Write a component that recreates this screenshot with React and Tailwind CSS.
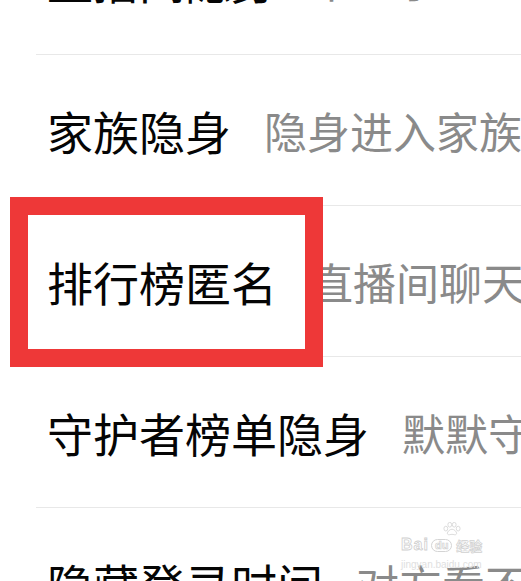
import React from "react";

const rows = [
  { title: "直播间隐身", desc: "不显示" },
  { title: "家族隐身", desc: "隐身进入家族" },
  { title: "排行榜匿名", desc: "直播间聊天" },
  { title: "守护者榜单隐身", desc: "默默守护" },
  { title: "隐藏登录时间", desc: "对方看不到" },
];

function Row({ title, desc, last }) {
  return (
    <div className="flex flex-col">
      <div className="flex h-[150px] items-center overflow-hidden whitespace-nowrap pl-[47px]">
        <span className="text-[46px] leading-none text-[#050505]">{title}</span>
        <span className="ml-[33px] text-[43px] leading-none text-[#8a8a8a]">{desc}</span>
      </div>
      {!last && <div className="ml-[36px] h-px bg-[#e8e8e8]" />}
    </div>
  );
}

function Paw() {
  return (
    <svg width="20" height="14" viewBox="0 0 24 17" fill="white" stroke="#d4d4d4" strokeWidth="1">
      <ellipse cx="4.5" cy="8" rx="2.3" ry="2.9" />
      <ellipse cx="9.3" cy="3.3" rx="2.3" ry="2.9" />
      <ellipse cx="14.7" cy="3.3" rx="2.3" ry="2.9" />
      <ellipse cx="19.5" cy="8" rx="2.3" ry="2.9" />
      <path d="M12 8.8c-3 0-5.6 3-5.6 5 0 1.5 1.5 2 3 1.6 1-0.3 1.7-0.4 2.6-0.4s1.6 0.1 2.6 0.4c1.5 0.4 3-0.1 3-1.6 0-2-2.6-5-5.6-5z" />
    </svg>
  );
}

export default function App() {
  return (
    <div
      className="relative h-[581px] w-[521px] overflow-hidden bg-white"
      style={{ fontFamily: '"Noto Sans CJK SC", "Noto Sans", sans-serif' }}
    >
      <div className="-mt-[96px] flex flex-col">
        {rows.map((r, i) => (
          <Row key={r.title} {...r} last={i === rows.length - 1} />
        ))}
      </div>

      {/* red annotation box */}
      <div className="absolute left-[10px] top-[197px] h-[170px] w-[313px] border-[18px] border-[#ee3838]" />

      {/* watermark */}
      <div className="absolute left-[401px] top-[522px] flex flex-col items-start">
        <div className="ml-[41px]">
          <Paw />
        </div>
        <div className="mt-[1px] flex items-center">
          <span
            className="text-[16px] font-bold leading-none tracking-[1px] text-white [-webkit-text-stroke:0.8px_#d0d0d0]"
            style={{ fontFamily: '"Liberation Sans", sans-serif' }}
          >
            Bai
          </span>
          <span
            className="ml-[2px] flex h-[13px] items-center rounded-full border border-[#d4d4d4] px-[3px] text-[11px] font-bold leading-none text-white [-webkit-text-stroke:0.7px_#d0d0d0]"
            style={{ fontFamily: '"Liberation Sans", sans-serif' }}
          >
            du
          </span>
          <span className="ml-[4px] text-[13px] font-bold leading-none text-white [-webkit-text-stroke:0.7px_#d0d0d0]">
            经验
          </span>
        </div>
        <span
          className="mt-[7px] text-[10px] leading-none text-[#e0e0e0]"
          style={{ fontFamily: '"Liberation Sans", sans-serif' }}
        >
          jingyan.baidu.com
        </span>
      </div>
    </div>
  );
}
